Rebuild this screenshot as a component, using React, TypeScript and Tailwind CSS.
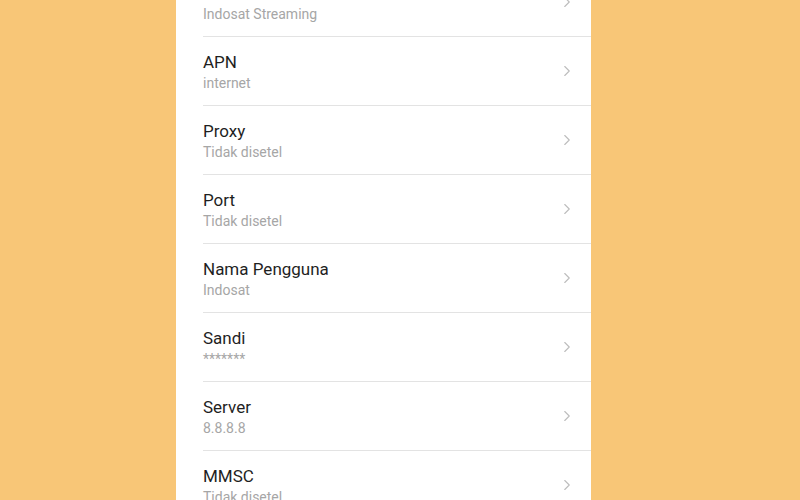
import { ChevronRight } from 'lucide-react'

const rows = [
  { title: 'Nama', value: 'Indosat Streaming' },
  { title: 'APN', value: 'internet' },
  { title: 'Proxy', value: 'Tidak disetel' },
  { title: 'Port', value: 'Tidak disetel' },
  { title: 'Nama Pengguna', value: 'Indosat' },
  { title: 'Sandi', value: '*******' },
  { title: 'Server', value: '8.8.8.8' },
  { title: 'MMSC', value: 'Tidak disetel' },
]

export default function App() {
  return (
    <div className="h-[500px] w-[800px] overflow-hidden bg-[#f8c677] font-['Roboto',sans-serif]">
      <div className="ml-[176px] h-full w-[415px] overflow-hidden bg-white">
        <div className="-mt-[32px]">
          {rows.map((row, i) => (
            <div key={i} className="ml-[27px] flex h-[69px] items-center border-b border-[#e3e3e3]">
              <div className="flex flex-1 flex-col pt-[1px]">
                <span className="text-[17px] leading-[22px] text-[#1f1f1f]">{row.title}</span>
                <span className="text-[14px] leading-[20px] text-[#a6a6a6]">{row.value}</span>
              </div>
              <ChevronRight className="mr-[15px] h-[18px] w-[18px] text-[#bdbdbd]" strokeWidth={1.5} />
            </div>
          ))}
        </div>
      </div>
    </div>
  )
}
